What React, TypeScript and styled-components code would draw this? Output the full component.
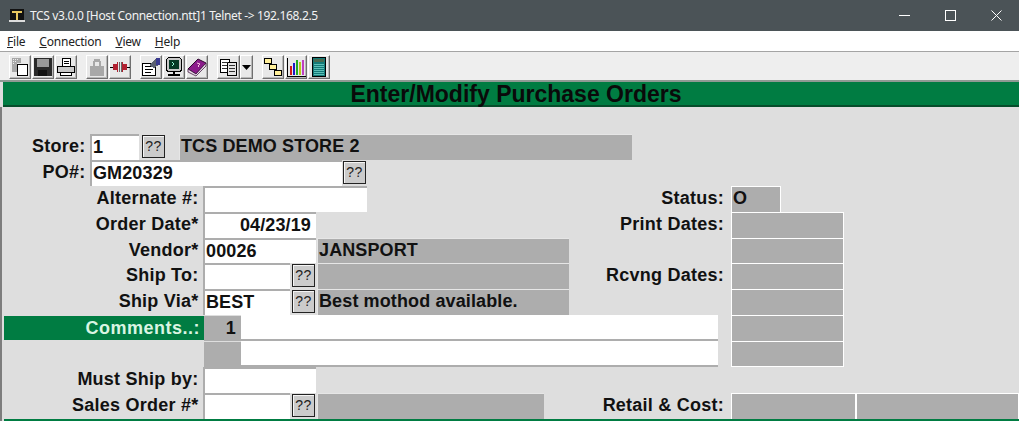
import React from "react";
import styled, { createGlobalStyle } from "styled-components";

const Global = createGlobalStyle`
  html, body { margin: 0; padding: 0; width: 1019px; height: 421px; overflow: hidden; background: #dedede; }
  * { box-sizing: border-box; }
`;
const Page = styled.div`width: 1019px; height: 421px; overflow: hidden; display: flex; flex-direction: column; font-family: "Liberation Sans", Arial, sans-serif;`;
const TitleBar = styled.div`height: 31px; background: #4b5357; display: flex; align-items: center; color: #f2f2f2; font: 12px "Noto Sans", "Open Sans", sans-serif; padding-left: 9px; flex: none;`;
const TitleText = styled.span`margin-left: 5px; white-space: nowrap; letter-spacing: -0.34px;`;
const WinButtons = styled.div`margin-left: auto; display: flex;`;
const WinButton = styled.div`width: 46px; height: 31px; display: flex; align-items: center; justify-content: center;`;
const MenuBar = styled.div`height: 20px; background: #fff; display: flex; align-items: center; gap: 14px; padding-left: 7px; font: 12px "Noto Sans", "Open Sans", sans-serif; letter-spacing: -0.22px; color: #222; flex: none;`;
const MenuItem = styled.span`u { text-decoration: underline; text-underline-offset: 1px; }`;
const ToolBar = styled.div`height: 29px; background: #eeeeee; border-top: 1px solid #a4a4a4; display: flex; align-items: flex-start; padding: 3px 0 0 9px; flex: none;`;
const ToolBtn = styled.div<{ $ml?: number; $w?: number }>`
  width: ${p => p.$w ?? 22}px; height: 24px; margin-left: ${p => p.$ml ?? 1}px; background: #e8e8e8;
  border-top: 1px solid #fff; border-left: 1px solid #fff; border-right: 1px solid #6f6f6f; border-bottom: 1px solid #6f6f6f;
  box-shadow: inset -1px -1px #b8b8b8;
  display: flex; align-items: center; justify-content: center;
`;
const FrameTop = styled.div`height: 2px; background: #8f9a94; flex: none;`;
const Header = styled.div`
  height: 25px; background: #007c42; border-bottom: 2px solid #064d2b; margin-left: 3px; color: #0a0a0a;
  font-size: 23px; font-weight: 700; text-align: center; line-height: 24px; padding-left: 10px; flex: none;
`;
const Form = styled.div`flex: 1; background: #dedede; box-shadow: inset 2px 0 #7d7d7d; padding-top: 27px; position: relative; display: flex; flex-direction: column; font-size: 18px; font-weight: 700; color: #111; letter-spacing: 0.12px;`;
const Row = styled.div`display: flex; height: 25.9px; flex: none;`;
const Left = styled.div<{ $w?: number }>`display: flex; flex: none; width: ${p => p.$w ?? 590}px;`;
const Label = styled.div<{ $w: number }>`width: ${p => p.$w + 0.5}px; margin-right: 5.5px; text-align: right; line-height: 25px; white-space: nowrap; flex: none; letter-spacing: 0.24px;`;
const RightLabel = styled.div`width: 134px; margin-right: 7px; text-align: right; line-height: 25px; white-space: nowrap; flex: none; letter-spacing: 0.24px;`;
const Input = styled.div<{ $w: number; $align?: string; $pr?: number }>`
  width: ${p => p.$w}px; height: 100%; margin-left: -1px; background: #fff; border-top: 2px solid #adadad; border-left: 2px solid #adadad;
  padding: 0 ${p => p.$pr ?? 0}px 0 1px; line-height: 23px; text-align: ${p => p.$align ?? "left"}; flex: none; white-space: nowrap;
`;
const Lookup = styled.div<{ $ml: number }>`
  width: 23px; height: 23px; margin: 1px 0 0 ${p => p.$ml}px; background: #cbcbcb; border: 1px solid #222; box-shadow: inset 1px 1px #f5f5f5;
  font-size: 14px; font-weight: 400; line-height: 21px; text-align: center; letter-spacing: 0.4px; color: #222; flex: none;
`;
const ReadOnly = styled.div<{ $w: number; $ml?: number }>`
  width: ${p => p.$w}px; height: 100%; margin-left: ${p => p.$ml ?? 0}px; background: #adadad; border-top: 1px solid #e6e6e6; border-left: 1px solid #e6e6e6;
  padding-left: 1px; line-height: 23px; flex: none; white-space: nowrap;
`;
const Box = styled.div<{ $w: number; $last?: boolean }>`width: ${p => p.$w}px; height: 100%; background: #adadad; border: 1px solid #fff; border-bottom-width: ${p => p.$last ? 1 : 0}px; padding-left: 1px; line-height: 23px; flex: none;`;
const GreenLabel = styled.div`width: 200px; height: 24px; margin: 1px 0 0 4px; background: #007c42; color: #d9f5e2; text-align: right; padding-right: 4px; line-height: 24px; flex: none; letter-spacing: 0.5px;`;
const Seq = styled.div<{ $spaced?: boolean }>`width: 37px; height: 25px; margin: 1px 0 0 ${p => p.$spaced ? 204 : 0}px; background: #adadad; text-align: right; padding-right: 5px; line-height: 24px; flex: none;`;
const CommentLine = styled.div`width: 477px; height: 100%; background: #fff; border-bottom: 2px solid #adadad; flex: none;`;
const FooterLine = styled.div`position: absolute; left: 4px; right: 0; bottom: 0; height: 2px; background: #007c42;`;

const I = ({ children }: { children: React.ReactNode }) => (
  <svg width="20" height="20" viewBox="0 0 20 20" shapeRendering="crispEdges">{children}</svg>
);
const Copy = () => <I><path d="M2 1h9v5H7v9H2z" fill="#8c8c8c" opacity=".7"/><path d="M3 2h1v1H3zM5 2h1v1H5zM7 2h1v1H7zM3 4h1v1H3zM5 4h1v1H5zM3 6h1v1H3z" fill="#eee"/><rect x="7.5" y="7.5" width="10" height="11" fill="#fff" stroke="#000"/></I>;
const Save = () => <I><rect x="1" y="1" width="18" height="18" fill="#2a2a2a"/><rect x="4" y="2" width="12" height="8" fill="#9a9a9a"/><rect x="5" y="13" width="9" height="6" fill="#111"/></I>;
const Print = () => <I><rect x="6.5" y="1.5" width="8" height="8" fill="#fff" stroke="#000"/><path d="M8 4h5M8 6h5" stroke="#000"/><rect x="1.5" y="9.5" width="17" height="6" fill="#c8c8c8" stroke="#000"/><rect x="4.5" y="15.5" width="11" height="3" fill="#fff" stroke="#000"/></I>;
const Lock = () => <I><path d="M6 9V4h1V2h6v2h1v5h-2V5H8v4z" fill="#a8a8a8"/><rect x="3" y="9" width="14" height="10" fill="#a8a8a8"/></I>;
const Plugs = () => <I><path d="M0 10h3M17 10h3" stroke="#000"/><path d="M3 7h4V5h1v10H7v-2H3z" fill="#b02030"/><path d="M17 7h-4V5h-1v10h1v-2h4z" fill="#b02030"/><path d="M9 5v10M11 5v10" stroke="#666"/></I>;
const Sheet = () => <I><rect x="1.5" y="6.5" width="13" height="12" fill="#fff" stroke="#000"/><path d="M4 9h8M4 12h8M4 15h6" stroke="#000"/><path d="M8 8l7-6h2l1 1v5l-5 3z" fill="#5a6070"/><rect x="15" y="1" width="4" height="7" fill="#3a3a90"/></I>;
const Monitor = () => <I><rect x="2.5" y="0.5" width="15" height="14" rx="3" fill="#c8c8c8" stroke="#000"/><rect x="5" y="3" width="10" height="9" rx="1" fill="#063a26"/><path d="M8 5l2 2-2 2" stroke="#9fd" fill="none"/><path d="M4 18h12M10 15v3" stroke="#000" strokeWidth="2"/></I>;
const Book = () => <svg width="20" height="20" viewBox="0 0 20 20"><path d="M1 12L11 2l8 4L9 17z" fill="#8b1c8b" stroke="#300830"/><path d="M1 12v3l8 4 10-10V6L9 17z" fill="#e8d8e8" stroke="#300830" strokeWidth=".7"/><path d="M10 6l3 1-2 2 1 1" stroke="#f5c0e0" fill="none"/></svg>;
const Pages = () => <I><rect x="1.5" y="2.5" width="9" height="13" fill="#fff" stroke="#000"/><rect x="8.5" y="5.5" width="9" height="13" fill="#e4e4e4" stroke="#000"/><path d="M3 5h6M3 8h5M3 11h5M10 8h6M10 11h6M10 14h6" stroke="#333"/></I>;
const Caret = () => <svg width="9" height="5" viewBox="0 0 9 5"><path d="M0 0h9L4.5 5z" fill="#000"/></svg>;
const Tree = () => <I><path d="M5 5l10 10" stroke="#000"/><rect x="1.5" y="1.5" width="7" height="5" fill="#ffef9a" stroke="#000"/><rect x="6.5" y="7.5" width="7" height="5" fill="#ffef9a" stroke="#000"/><rect x="11.5" y="13.5" width="7" height="5" fill="#ffef9a" stroke="#000"/></I>;
const Bars = () => <I><path d="M1.5 1v18h18" stroke="#000" fill="none"/><rect x="4" y="9" width="2" height="9" fill="#d01818"/><rect x="7" y="6" width="2" height="12" fill="#1a1ac8"/><rect x="10" y="3" width="2" height="15" fill="#22aa22"/><rect x="13" y="5" width="2" height="13" fill="#b8c818"/><rect x="16" y="3" width="2" height="15" fill="#c040c0"/></I>;
const Calc = () => <I><rect x="3.5" y="0.5" width="13" height="19" fill="#137a78" stroke="#000"/><rect x="5" y="2" width="10" height="3" fill="#4a6a50"/><path d="M5 7h10M5 9h10M5 11h10M5 13h10M5 15h10M5 17h10" stroke="#5cc0b8"/></I>;

const AppIcon = () => (
  <svg width="16" height="16" viewBox="0 0 16 16" shapeRendering="crispEdges">
    <rect x="1" y="1" width="14" height="11" fill="#111"/>
    <path d="M3 3h10v2H9v7H7V5H3z" fill="#e8c860"/>
    <rect x="0" y="12" width="16" height="2" fill="#ddd"/>
  </svg>
);

export default function App() {
  return (
    <Page>
      <Global />
      <TitleBar>
        <AppIcon />
        <TitleText>TCS v3.0.0 [Host Connection.ntt]1 Telnet -&gt; 192.168.2.5</TitleText>
        <WinButtons>
          <WinButton><svg width="11" height="11" viewBox="0 0 11 11" shapeRendering="crispEdges"><path d="M0 5.5h11" stroke="#fff"/></svg></WinButton>
          <WinButton><svg width="11" height="11" viewBox="0 0 11 11" shapeRendering="crispEdges"><rect x=".5" y=".5" width="10" height="10" fill="none" stroke="#fff"/></svg></WinButton>
          <WinButton><svg width="11" height="11" viewBox="0 0 11 11"><path d="M.5.5l10 10M10.5.5l-10 10" stroke="#fff"/></svg></WinButton>
        </WinButtons>
      </TitleBar>
      <MenuBar>
        <MenuItem><u>F</u>ile</MenuItem>
        <MenuItem><u>C</u>onnection</MenuItem>
        <MenuItem><u>V</u>iew</MenuItem>
        <MenuItem><u>H</u>elp</MenuItem>
      </MenuBar>
      <ToolBar>
        <ToolBtn $ml={0}><Copy /></ToolBtn>
        <ToolBtn><Save /></ToolBtn>
        <ToolBtn><Print /></ToolBtn>
        <ToolBtn $ml={9}><Lock /></ToolBtn>
        <ToolBtn><Plugs /></ToolBtn>
        <ToolBtn $ml={9}><Sheet /></ToolBtn>
        <ToolBtn><Monitor /></ToolBtn>
        <ToolBtn><Book /></ToolBtn>
        <ToolBtn $ml={9} $w={23}><Pages /></ToolBtn>
        <ToolBtn $ml={0} $w={13}><Caret /></ToolBtn>
        <ToolBtn $ml={9}><Tree /></ToolBtn>
        <ToolBtn><Bars /></ToolBtn>
        <ToolBtn><Calc /></ToolBtn>
      </ToolBar>
      <FrameTop />
      <Header>Enter/Modify Purchase Orders</Header>
      <Form>
        <Row>
          <Label $w={85}>Store:</Label><Input $w={49}>1</Input><Lookup $ml={3}>??</Lookup>
          <ReadOnly $w={453} $ml={14}>TCS DEMO STORE 2</ReadOnly>
        </Row>
        <Row>
          <Label $w={85}>PO#:</Label><Input $w={252}>GM20329</Input><Lookup $ml={1}>??</Lookup>
        </Row>
        <Row>
          <Left><Label $w={198}>Alternate #:</Label><Input $w={164} /></Left>
          <RightLabel>Status:</RightLabel><Box $w={50}>O</Box>
        </Row>
        <Row>
          <Left><Label $w={198}>Order Date*</Label><Input $w={113} $align="right" $pr={5}>04/23/19</Input></Left>
          <RightLabel>Print Dates:</RightLabel><Box $w={113} />
        </Row>
        <Row>
          <Left><Label $w={198}>Vendor*</Label><Input $w={113}>00026</Input><ReadOnly $w={252} $ml={1}>JANSPORT</ReadOnly></Left>
          <RightLabel /><Box $w={113} />
        </Row>
        <Row>
          <Left><Label $w={198}>Ship To:</Label><Input $w={87} /><Lookup $ml={2}>??</Lookup><ReadOnly $w={252} $ml={2} /></Left>
          <RightLabel>Rcvng Dates:</RightLabel><Box $w={113} />
        </Row>
        <Row>
          <Left><Label $w={198}>Ship Via*</Label><Input $w={87}>BEST</Input><Lookup $ml={2}>??</Lookup><ReadOnly $w={252} $ml={2}>Best mothod available.</ReadOnly></Left>
          <RightLabel /><Box $w={113} />
        </Row>
        <Row>
          <Left $w={731}><GreenLabel>Comments..:</GreenLabel><Seq>1</Seq><CommentLine /></Left>
          <Box $w={113} />
        </Row>
        <Row>
          <Left $w={731}><Seq $spaced /><CommentLine /></Left>
          <Box $w={113} $last />
        </Row>
        <Row>
          <Label $w={198}>Must Ship by:</Label><Input $w={113} />
        </Row>
        <Row>
          <Left><Label $w={198}>Sales Order #*</Label><Input $w={87} /><Lookup $ml={2}>??</Lookup><ReadOnly $w={227} $ml={2} /></Left>
          <RightLabel>Retail &amp; Cost:</RightLabel><Box $w={125} /><Box $w={163} />
        </Row>
        <FooterLine />
      </Form>
    </Page>
  );
}
